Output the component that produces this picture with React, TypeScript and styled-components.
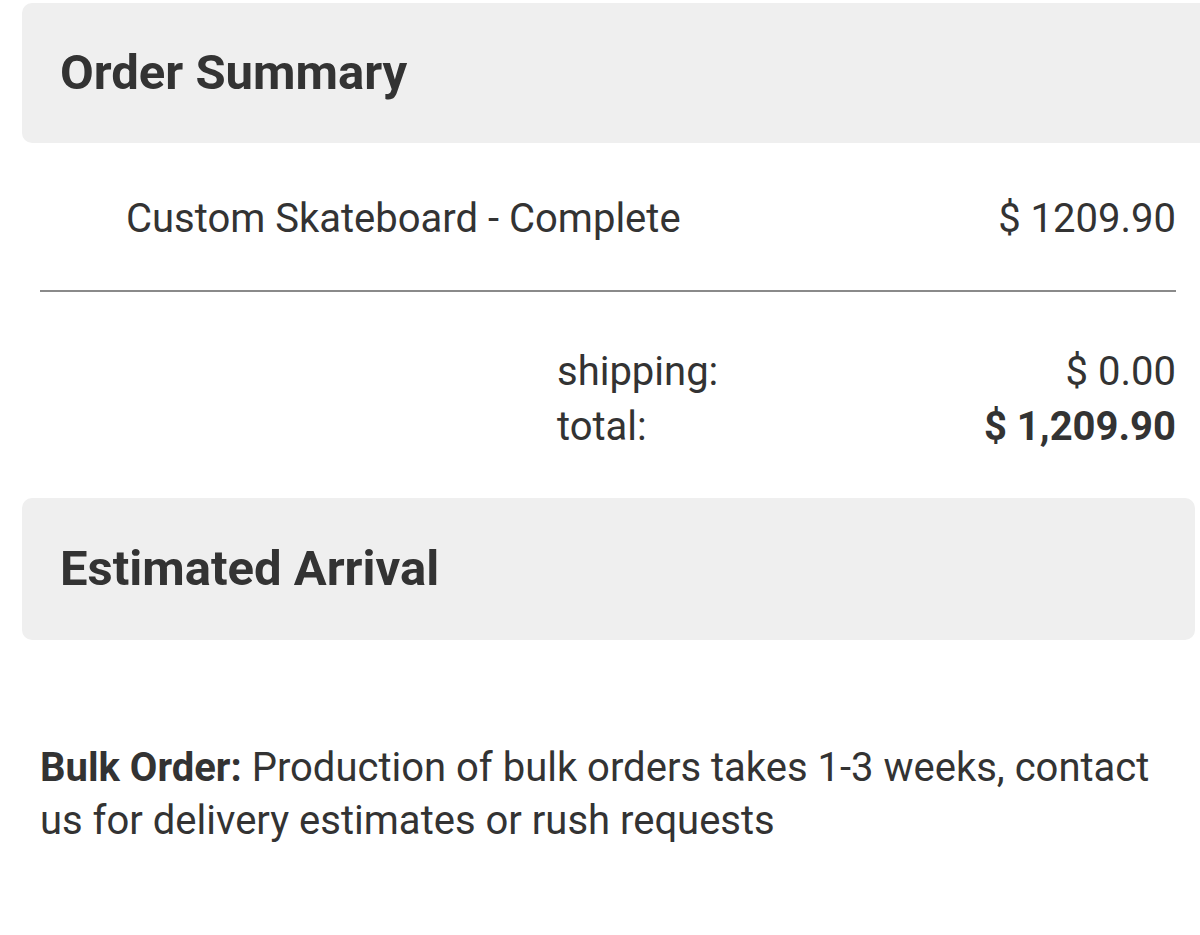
import * as React from 'react'
import styled, { createGlobalStyle } from 'styled-components'

const GlobalStyle = createGlobalStyle`
    html, body {
        margin: 0;
        padding: 0;
        background: #ffffff;
    }
    body {
        font-family: Roboto, 'Noto Sans', 'Liberation Sans', sans-serif;
        color: #333333;
        overflow: hidden;
    }
`

const Page = styled.div`
    width: 1200px;
    height: 935px;
    padding-top: 3px;
    box-sizing: border-box;
    overflow: hidden;
`

const SectionHeader = styled.div<{ $bleed?: boolean }>`
    margin-left: 22px;
    margin-right: ${(props) => (props.$bleed ? '-10px' : '5px')};
    height: ${(props) => (props.$bleed ? '140px' : '142px')};
    background-color: #efefef;
    border-radius: 10px;
    padding-left: 38px;
    display: flex;
    align-items: center;
    box-sizing: border-box;
`

const SectionTitle = styled.h2`
    margin: 0;
    font-size: 49px;
    line-height: 1.2;
    font-weight: 700;
    color: #333333;
`

const ItemRow = styled.div`
    display: flex;
    justify-content: space-between;
    margin: 51px 24px 0 126px;
    font-size: 40px;
    line-height: 50px;
`

const Divider = styled.hr`
    margin: 46px 24px 0 40px;
    border: none;
    height: 2px;
    background-color: #8a8a8a;
`

const Totals = styled.div`
    display: grid;
    grid-template-columns: 1fr auto;
    margin: 52px 24px 0 557px;
    font-size: 40px;
    line-height: 55px;
`

const Amount = styled.span<{ $bold?: boolean }>`
    text-align: right;
    font-weight: ${(props) => (props.$bold ? 700 : 400)};
`

const Spacer = styled.div`
    height: 44px;
`

const Note = styled.p`
    margin: 101px 28px 0 40px;
    font-size: 40px;
    line-height: 53px;

    strong {
        font-weight: 700;
    }
`

const App: React.FC = () => {
    return (
        <>
            <GlobalStyle />
            <Page>
                <SectionHeader $bleed>
                    <SectionTitle>Order Summary</SectionTitle>
                </SectionHeader>

                <ItemRow>
                    <span>Custom Skateboard - Complete</span>
                    <span>$ 1209.90</span>
                </ItemRow>
                <Divider />

                <Totals>
                    <span>shipping:</span>
                    <Amount>$ 0.00</Amount>
                    <span>total:</span>
                    <Amount $bold>$ 1,209.90</Amount>
                </Totals>
                <Spacer />

                <SectionHeader>
                    <SectionTitle>Estimated Arrival</SectionTitle>
                </SectionHeader>

                <Note>
                    <strong>Bulk Order:</strong> Production of bulk orders takes 1-3 weeks,
                    contact us for delivery estimates or rush requests
                </Note>
            </Page>
        </>
    )
}

export default App
